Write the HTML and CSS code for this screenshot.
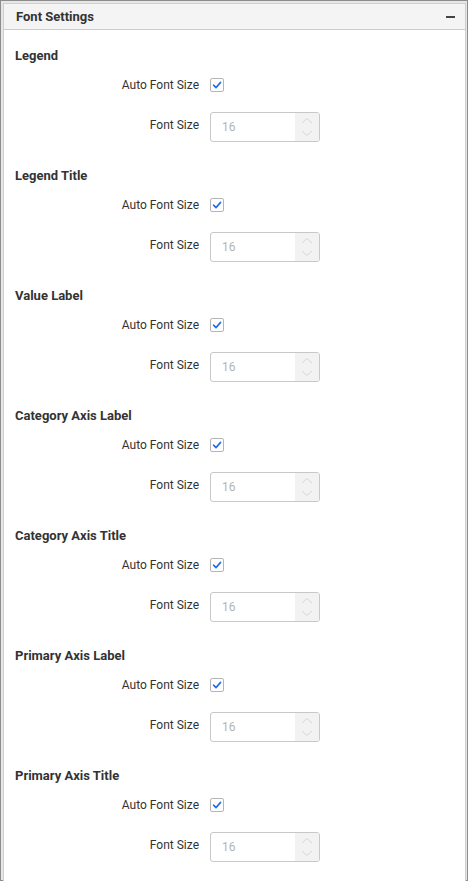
FILE: index.html
```html
<!DOCTYPE html>
<html>
<head>
<meta charset="utf-8">
<link rel="stylesheet" href="styles.css">
</head>
<body>
<div class="frame">
  <div class="panel">
    <div class="panel-header">
      <span class="panel-title">Font Settings</span>
      <span class="collapse"></span>
    </div>
    <div class="panel-body">
      <div class="section">
        <div class="section-title">Legend</div>
        <div class="row row-check"><span class="label">Auto Font Size</span><span class="checkbox"><svg viewBox="0 0 14 14" width="14" height="14"><polyline points="3.5,7.2 6,9.6 10.6,4.4" /></svg></span></div>
        <div class="row row-input"><span class="label">Font Size</span><div class="numeric"><span class="value">16</span><span class="spin"><svg viewBox="0 0 24 28" width="24" height="28"><polyline points="7,10 12,5.5 17,10"/><polyline points="7,18 12,22.5 17,18"/></svg></span></div></div>
      </div>
      <div class="section">
        <div class="section-title">Legend Title</div>
        <div class="row row-check"><span class="label">Auto Font Size</span><span class="checkbox"><svg viewBox="0 0 14 14" width="14" height="14"><polyline points="3.5,7.2 6,9.6 10.6,4.4" /></svg></span></div>
        <div class="row row-input"><span class="label">Font Size</span><div class="numeric"><span class="value">16</span><span class="spin"><svg viewBox="0 0 24 28" width="24" height="28"><polyline points="7,10 12,5.5 17,10"/><polyline points="7,18 12,22.5 17,18"/></svg></span></div></div>
      </div>
      <div class="section">
        <div class="section-title">Value Label</div>
        <div class="row row-check"><span class="label">Auto Font Size</span><span class="checkbox"><svg viewBox="0 0 14 14" width="14" height="14"><polyline points="3.5,7.2 6,9.6 10.6,4.4" /></svg></span></div>
        <div class="row row-input"><span class="label">Font Size</span><div class="numeric"><span class="value">16</span><span class="spin"><svg viewBox="0 0 24 28" width="24" height="28"><polyline points="7,10 12,5.5 17,10"/><polyline points="7,18 12,22.5 17,18"/></svg></span></div></div>
      </div>
      <div class="section">
        <div class="section-title">Category Axis Label</div>
        <div class="row row-check"><span class="label">Auto Font Size</span><span class="checkbox"><svg viewBox="0 0 14 14" width="14" height="14"><polyline points="3.5,7.2 6,9.6 10.6,4.4" /></svg></span></div>
        <div class="row row-input"><span class="label">Font Size</span><div class="numeric"><span class="value">16</span><span class="spin"><svg viewBox="0 0 24 28" width="24" height="28"><polyline points="7,10 12,5.5 17,10"/><polyline points="7,18 12,22.5 17,18"/></svg></span></div></div>
      </div>
      <div class="section">
        <div class="section-title">Category Axis Title</div>
        <div class="row row-check"><span class="label">Auto Font Size</span><span class="checkbox"><svg viewBox="0 0 14 14" width="14" height="14"><polyline points="3.5,7.2 6,9.6 10.6,4.4" /></svg></span></div>
        <div class="row row-input"><span class="label">Font Size</span><div class="numeric"><span class="value">16</span><span class="spin"><svg viewBox="0 0 24 28" width="24" height="28"><polyline points="7,10 12,5.5 17,10"/><polyline points="7,18 12,22.5 17,18"/></svg></span></div></div>
      </div>
      <div class="section">
        <div class="section-title">Primary Axis Label</div>
        <div class="row row-check"><span class="label">Auto Font Size</span><span class="checkbox"><svg viewBox="0 0 14 14" width="14" height="14"><polyline points="3.5,7.2 6,9.6 10.6,4.4" /></svg></span></div>
        <div class="row row-input"><span class="label">Font Size</span><div class="numeric"><span class="value">16</span><span class="spin"><svg viewBox="0 0 24 28" width="24" height="28"><polyline points="7,10 12,5.5 17,10"/><polyline points="7,18 12,22.5 17,18"/></svg></span></div></div>
      </div>
      <div class="section">
        <div class="section-title">Primary Axis Title</div>
        <div class="row row-check"><span class="label">Auto Font Size</span><span class="checkbox"><svg viewBox="0 0 14 14" width="14" height="14"><polyline points="3.5,7.2 6,9.6 10.6,4.4" /></svg></span></div>
        <div class="row row-input"><span class="label">Font Size</span><div class="numeric"><span class="value">16</span><span class="spin"><svg viewBox="0 0 24 28" width="24" height="28"><polyline points="7,10 12,5.5 17,10"/><polyline points="7,18 12,22.5 17,18"/></svg></span></div></div>
      </div>
    </div>
  </div>
</div>
</body>
</html>
```
FILE: styles.css
```css
html, body {
  margin: 0;
  padding: 0;
  background: #ffffff;
}
body {
  font-family: Roboto, "Liberation Sans", Arial, sans-serif;
  color: #333333;
}
.frame {
  box-sizing: border-box;
  width: 468px;
  height: 881px;
  border: 1px solid #8c8c8c;
  padding: 2px 1px 0 2px;
  background: #e6e6e6;
  display: flex;
  flex-direction: column;
}
.panel {
  flex: 1;
  border: 1px solid #cfcfcf;
  border-bottom: none;
  background: #ffffff;
  display: flex;
  flex-direction: column;
}
.panel-header {
  height: 25px;
  background: #f4f4f4;
  border-bottom: 1px solid #cccccc;
  display: flex;
  align-items: center;
  justify-content: space-between;
  padding: 0 10px 0 12px;
}
.panel-title {
  font-size: 13px;
  font-weight: 700;
  color: #333333;
}
.collapse {
  width: 9px;
  height: 2px;
  background: #444444;
}
.panel-body {
  padding: 16px 0 0 11px;
}
.section {
  margin-bottom: 24px;
}
.section-title {
  font-size: 13px;
  font-weight: 700;
  line-height: 20px;
  height: 20px;
  color: #333333;
}
.row {
  display: flex;
  align-items: center;
  gap: 11px;
}
.row-check {
  margin-top: 9px;
  height: 20px;
}
.row-input {
  margin-top: 17px;
  height: 30px;
}
.label {
  width: 184px;
  text-align: right;
  font-size: 12px;
  color: #333333;
}
.row-input .label {
  margin-top: -4px;
}
.checkbox {
  box-sizing: border-box;
  width: 14px;
  height: 14px;
  border: 1px solid #b5b5b5;
  border-radius: 2px;
  background: #ffffff;
  display: flex;
  align-items: center;
  justify-content: center;
}
.checkbox svg {
  display: block;
  margin: -1px;
}
.checkbox polyline {
  fill: none;
  stroke: #1f6fe5;
  stroke-width: 1.6;
  stroke-linecap: round;
  stroke-linejoin: round;
}
.numeric {
  box-sizing: border-box;
  width: 110px;
  height: 30px;
  border: 1px solid #c8c8c8;
  border-radius: 3px;
  display: flex;
  overflow: hidden;
  background: #ffffff;
}
.value {
  flex: 1;
  padding-left: 11px;
  font-size: 12px;
  color: #b3b3b3;
  line-height: 28px;
  box-sizing: border-box;
}
.spin {
  width: 24px;
  background: #f2f2f2;
  display: flex;
}
.spin polyline {
  fill: none;
  stroke: #d6d6d6;
  stroke-width: 1;
}
```
